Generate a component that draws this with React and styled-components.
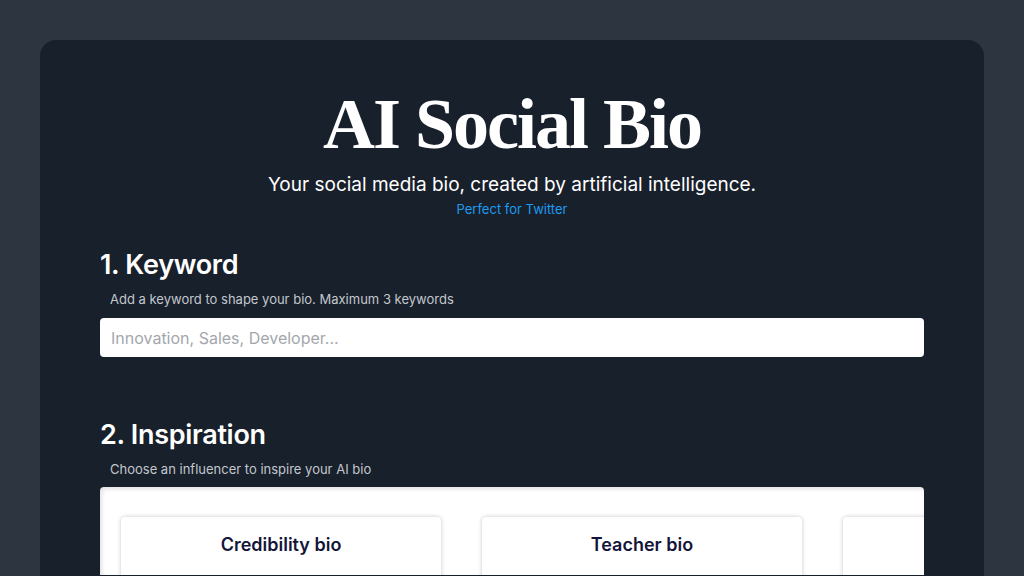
import React from 'react';
import styled, { createGlobalStyle } from 'styled-components';

const GlobalStyle = createGlobalStyle`
  html, body {
    margin: 0;
    padding: 0;
    background-color: #2d3640;
    font-family: Inter, 'Noto Sans', sans-serif;
  }
  * {
    box-sizing: border-box;
  }
`;

const Page = styled.div`
  min-height: 100vh;
  padding: 40px 40px 0;
`;

const Card = styled.main`
  background-color: #18202b;
  border-radius: 16px 16px 0 0;
  padding: 48px 60px 0;
  min-height: 536px;
  color: #ffffff;
`;

const Header = styled.header`
  display: flex;
  flex-direction: column;
  align-items: center;
  text-align: center;
`;

const Title = styled.h1`
  margin: 0;
  font-family: 'Liberation Serif', 'DejaVu Serif', serif;
  font-weight: 700;
  font-size: 72px;
  letter-spacing: -2px;
  line-height: 72px;
  color: #ffffff;
`;

const Subtitle = styled.p`
  margin: 13px 0 0;
  font-size: 19px;
  line-height: 24px;
  color: #ffffff;
`;

const Tagline = styled.a`
  margin-top: 3px;
  font-size: 13px;
  line-height: 18px;
  color: #1d9bf0;
  text-decoration: none;
`;

const Section = styled.section`
  margin-top: ${(p) => p.$top}px;
`;

const SectionTitle = styled.h2`
  margin: 0;
  font-size: 27px;
  font-weight: 600;
  line-height: 34px;
  letter-spacing: -0.3px;
  color: #ffffff;
`;

const Hint = styled.p`
  margin: 8px 0 ${(p) => p.$gap || 10}px 10px;
  font-size: 13px;
  line-height: 18px;
  color: #c3c7cd;
`;

const KeywordInput = styled.input`
  display: block;
  width: 100%;
  height: 39px;
  padding: 0 11px;
  border: none;
  border-radius: 4px;
  background: #ffffff;
  font-family: Inter, 'Noto Sans', sans-serif;
  font-size: 16px;
  color: #222;
  outline: none;

  &::placeholder {
    color: #a3a7ad;
  }
`;

const Carousel = styled.div`
  background: #ffffff;
  border-radius: 4px 4px 0 0;
  box-shadow: inset 2px 2px 4px rgba(0, 0, 0, 0.12);
  overflow: hidden;
  padding: 30px 0 0 21px;
  height: 88px;
`;

const Track = styled.div`
  display: flex;
  gap: 41px;
`;

const BioCard = styled.div`
  flex: 0 0 320px;
  height: 120px;
  background: #ffffff;
  border-radius: 4px;
  box-shadow: 0 0 4px rgba(0, 0, 0, 0.22);
  padding-top: 17px;
  text-align: center;
`;

const BioName = styled.h3`
  margin: 0;
  font-size: 18px;
  font-weight: 600;
  line-height: 22px;
  color: #14143a;
`;

const bios = ['Credibility bio', 'Teacher bio', 'Founder bio'];

export default function App() {
  return (
    <>
      <GlobalStyle />
      <Page>
        <Card>
          <Header>
            <Title>AI Social Bio</Title>
            <Subtitle>Your social media bio, created by artificial intelligence.</Subtitle>
            <Tagline href="#">Perfect for Twitter</Tagline>
          </Header>

          <Section $top={30}>
            <SectionTitle>1. Keyword</SectionTitle>
            <Hint>Add a keyword to shape your bio. Maximum 3 keywords</Hint>
            <KeywordInput placeholder="Innovation, Sales, Developer..." />
          </Section>

          <Section $top={61}>
            <SectionTitle>2. Inspiration</SectionTitle>
            <Hint $gap={9}>Choose an influencer to inspire your AI bio</Hint>
            <Carousel>
              <Track>
                {bios.map((b) => (
                  <BioCard key={b}>
                    <BioName>{b}</BioName>
                  </BioCard>
                ))}
              </Track>
            </Carousel>
          </Section>
        </Card>
      </Page>
    </>
  );
}
